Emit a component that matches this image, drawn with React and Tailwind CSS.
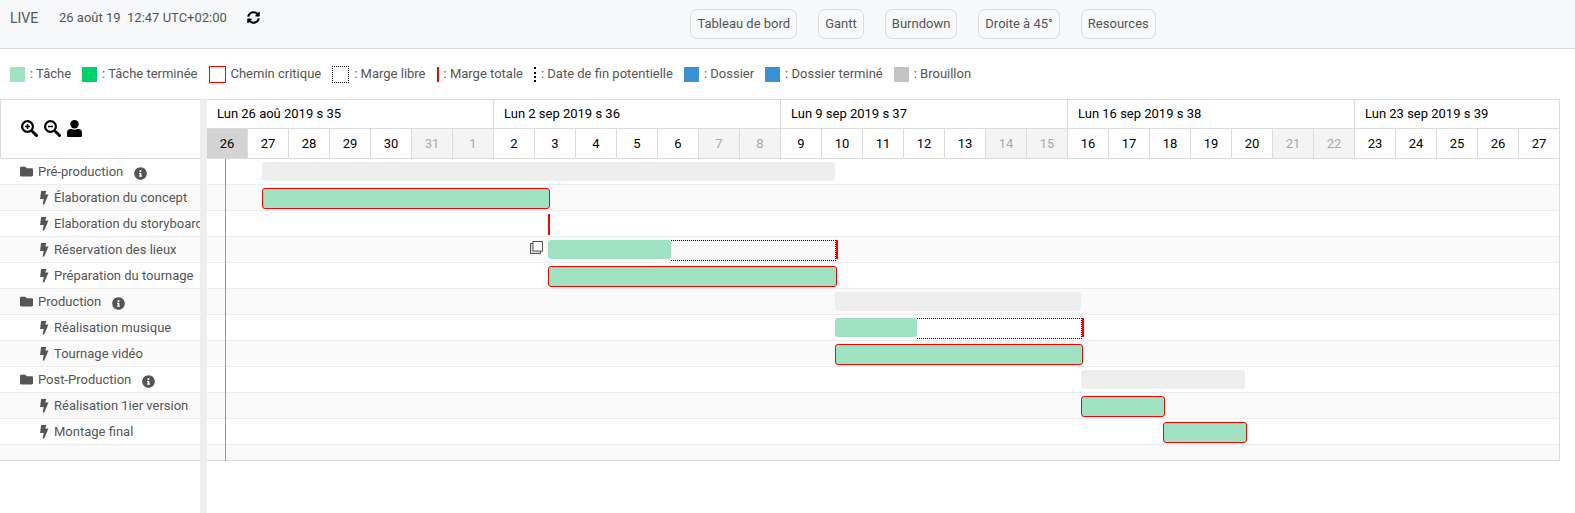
import { FaSyncAlt, FaFolder, FaInfoCircle } from "react-icons/fa";

const DAY = 41;
const WEEKEND = [31, 1, 7, 8, 14, 15, 21, 22];
const DAYS = [
  26, 27, 28, 29, 30, 31, 1, 2, 3, 4, 5, 6, 7, 8, 9, 10, 11, 12, 13, 14, 15, 16, 17, 18, 19, 20, 21, 22, 23, 24, 25,
  26, 27,
];
const SPAN = DAY * DAYS.length;
const pct = (n) => `${(n / SPAN) * 100}%`;

const WEEKS = [
  { label: "Lun 26 aoû 2019 s 35", cls: "col-span-7" },
  { label: "Lun 2 sep 2019 s 36", cls: "col-span-7" },
  { label: "Lun 9 sep 2019 s 37", cls: "col-span-7" },
  { label: "Lun 16 sep 2019 s 38", cls: "col-span-7" },
  { label: "Lun 23 sep 2019 s 39", cls: "col-span-5" },
];

const ROWS = [
  { name: "Pré-production", kind: "folder", start: 55, end: 628 },
  { name: "Élaboration du concept", kind: "critical", start: 55, end: 343 },
  { name: "Elaboration du storyboard", kind: "milestone", start: 341, end: 343 },
  { name: "Réservation des lieux", kind: "task", start: 341, end: 464, free: 629, copy: true },
  { name: "Préparation du tournage", kind: "critical", start: 341, end: 630 },
  { name: "Production", kind: "folder", start: 628, end: 874 },
  { name: "Réalisation musique", kind: "task", start: 628, end: 710, free: 875 },
  { name: "Tournage vidéo", kind: "critical", start: 628, end: 876 },
  { name: "Post-Production", kind: "folder", start: 874, end: 1038 },
  { name: "Réalisation 1ier version", kind: "critical", start: 874, end: 958 },
  { name: "Montage final", kind: "critical", start: 956, end: 1040 },
];

const LEGEND = [
  { swatch: "size-[15px] bg-[#a0e3c3]", label: ": Tâche" },
  { swatch: "size-[15px] bg-[#00d26a]", label: ": Tâche terminée" },
  { swatch: "size-[17px] border border-[#ff0000]", label: "Chemin critique" },
  { swatch: "size-[17px] border border-dotted border-black", label: ": Marge libre" },
  { swatch: "h-[15px] border-l-2 border-[#ff0000]", label: ": Marge totale" },
  { swatch: "h-[15px] border-l-2 border-dotted border-black", label: ": Date de fin potentielle" },
  { swatch: "size-[15px] bg-[#3a91d4]", label: ": Dossier" },
  { swatch: "size-[15px] bg-[#3a91d4]", label: ": Dossier terminé" },
  { swatch: "size-[15px] bg-[#c4c4c4]", label: ": Brouillon" },
];

const TABS = ["Tableau de bord", "Gantt", "Burndown", "Droite à 45°", "Resources"];

const BAR = {
  folder: "h-[19px] rounded-[3px] bg-[#eeeeee]",
  critical: "h-[21px] rounded-[3px] border border-[#ff0000] bg-[#a0e3c3]",
  milestone: "h-[21px] bg-[#ff0000]",
  task: "h-[19px] rounded-[3px] bg-[#a0e3c3]",
};

function CopyIcon() {
  return (
    <svg viewBox="0 0 13 13" className="size-[13px]" fill="none" stroke="#555" aria-hidden="true">
      <rect x=".5" y="2.5" width="10" height="10" fill="#ddd" />
      <rect x="3" y="0.5" width="9.5" height="9.5" fill="#fff" />
    </svg>
  );
}

function MagnifierIcon({ plus }) {
  return (
    <svg viewBox="0 0 17 17" className="size-[17px]" fill="none" stroke="currentColor" aria-hidden="true">
      <circle cx="6.5" cy="6.5" r="5.4" strokeWidth="2.2" />
      <path d="M10.7 10.700l1.300 1.300" strokeWidth="2" />
      <path d="M12 12l3.500 3.500" strokeWidth="3" strokeLinecap="round" />
      <path d={plus ? "M4 6.5h5M6.5 4v5" : "M4 6.5h5"} strokeWidth="1.5" />
    </svg>
  );
}

function PersonIcon() {
  return (
    <svg viewBox="0 0 15 17" className="h-[17px] w-[15px]" fill="currentColor" aria-hidden="true">
      <circle cx="7.5" cy="4.2" r="4.2" />
      <path d="M3.700 9h.8a6.400 6.400 0 0 0 6 0h.8A3.700 3.700 0 0 1 15 12.700v2.700c0 .9-.7 1.600-1.600 1.600H1.600C.7 17 0 16.300 0 15.400v-2.700A3.700 3.700 0 0 1 3.700 9z" />
    </svg>
  );
}

function BoltIcon() {
  return (
    <svg viewBox="0 0 9 14" className="mr-[5px] ml-10 h-[14px] w-[9px] shrink-0" fill="currentColor" aria-hidden="true">
      <path d="M1.100 0h5.300L5.300 3.600h3.200L4.200 13.500H2.700l1-5.500H.1z" />
    </svg>
  );
}

function Bars({ row }) {
  return (
    <>
      <div
        className={`absolute top-[3px] ${BAR[row.kind]}`}
        style={{ left: pct(row.start), width: pct(row.end - row.start) }}
      />
      {row.free && (
        <>
          <div
            className="absolute top-[3px] h-[21px] border border-l-0 border-dotted border-black"
            style={{ left: pct(row.end), width: pct(row.free - row.end) }}
          />
          <div className="absolute top-[3px] h-[19px] w-[2px] bg-[#ff0000]" style={{ left: pct(row.free) }} />
        </>
      )}
      {row.copy && (
        <button
          type="button"
          aria-label="Dupliquer"
          className="absolute top-1"
          style={{ left: pct(row.start - 18) }}
        >
          <CopyIcon />
        </button>
      )}
    </>
  );
}

export default function App() {
  return (
    <div className="flex min-h-screen flex-col bg-white font-['Roboto',sans-serif] text-[13px] leading-4 text-[#555555]">
      <header className="flex h-[49px] items-start border-b border-[#dcdcdc] bg-[#f6f8fa] pt-[9px] pl-[10px]">
        <div className="flex flex-10 items-start leading-[18px]">
          <span className="w-[49px] text-[14px]">LIVE</span>
          <time className="whitespace-pre">26 août 19  12:47 UTC+02:00</time>
          <button type="button" aria-label="Actualiser" className="ml-5 pt-[2px] text-black">
            <FaSyncAlt className="size-[13px]" />
          </button>
        </div>
        <nav className="flex flex-13 gap-[21px]">
          {TABS.map((tab) => (
            <button
              key={tab}
              type="button"
              className="h-[30px] rounded-[7px] border border-[#dcdcdc] px-[6px] whitespace-nowrap"
            >
              {tab}
            </button>
          ))}
        </nav>
      </header>

      <ul className="flex h-[50px] items-center gap-[11px] pl-[10px] whitespace-nowrap">
        {LEGEND.map((item) => (
          <li key={item.label} className="flex items-center gap-[5px]">
            <span className={item.swatch} />
            {item.label}
          </li>
        ))}
      </ul>

      <main className="flex flex-1">
        <aside className="w-[200px] shrink-0">
          <div className="flex h-[60px] items-start gap-[6px] border border-r-0 border-[#dcdcdc] pt-5 pl-5 text-black">
            <button type="button" aria-label="Zoom avant">
              <MagnifierIcon plus />
            </button>
            <button type="button" aria-label="Zoom arrière">
              <MagnifierIcon />
            </button>
            <button type="button" aria-label="Ressources">
              <PersonIcon />
            </button>
          </div>
          <ul className="border-b border-[#dcdcdc]">
            {ROWS.map((row) => (
              <li
                key={row.name}
                className="flex h-[26px] items-center overflow-hidden border-b border-[#eeeeee] whitespace-nowrap even:bg-[#fafafa]"
              >
                {row.kind === "folder" ? (
                  <>
                    <FaFolder className="mr-[5px] ml-5 size-[13px] shrink-0" />
                    {row.name}
                    <FaInfoCircle className="mt-[3px] ml-[11px] size-[13px] shrink-0" />
                  </>
                ) : (
                  <>
                    <BoltIcon />
                    {row.name}
                  </>
                )}
              </li>
            ))}
            <li className="h-[15px] bg-[#fafafa]" />
          </ul>
        </aside>

        <div className="w-[7px] shrink-0 bg-[#eeeeee]" />

        <section className="mr-[15px] min-w-0 flex-1">
          <div className="grid grid-cols-[repeat(33,minmax(0,1fr))] border-t border-[#dcdcdc] text-black">
            {WEEKS.map((week) => (
              <div
                key={week.label}
                className={`flex h-[29px] items-center border-r border-b border-[#dcdcdc] pl-[10px] whitespace-nowrap ${week.cls}`}
              >
                {week.label}
              </div>
            ))}
            {DAYS.map((day, i) => (
              <div
                key={i}
                className={`flex h-[30px] items-center justify-center border-r border-b border-[#dcdcdc] ${
                  i === 0 ? "bg-[#d3d3d3]" : WEEKEND.includes(day) ? "bg-[#f4f4f4] text-[#aaaaaa]" : ""
                }`}
              >
                {day}
              </div>
            ))}
          </div>
          <div className="relative border-r border-b border-[#dcdcdc]">
            {ROWS.map((row) => (
              <div key={row.name} className="h-[26px] border-b border-[#eeeeee] even:bg-[#fafafa]">
                <div className="relative -mr-px">
                  <Bars row={row} />
                </div>
              </div>
            ))}
            <div className="h-[15px] bg-[#fafafa]" />
            <div className="absolute top-0 -bottom-px w-px bg-[#999999]" style={{ left: pct(18) }} />
          </div>
        </section>
      </main>
    </div>
  );
}
